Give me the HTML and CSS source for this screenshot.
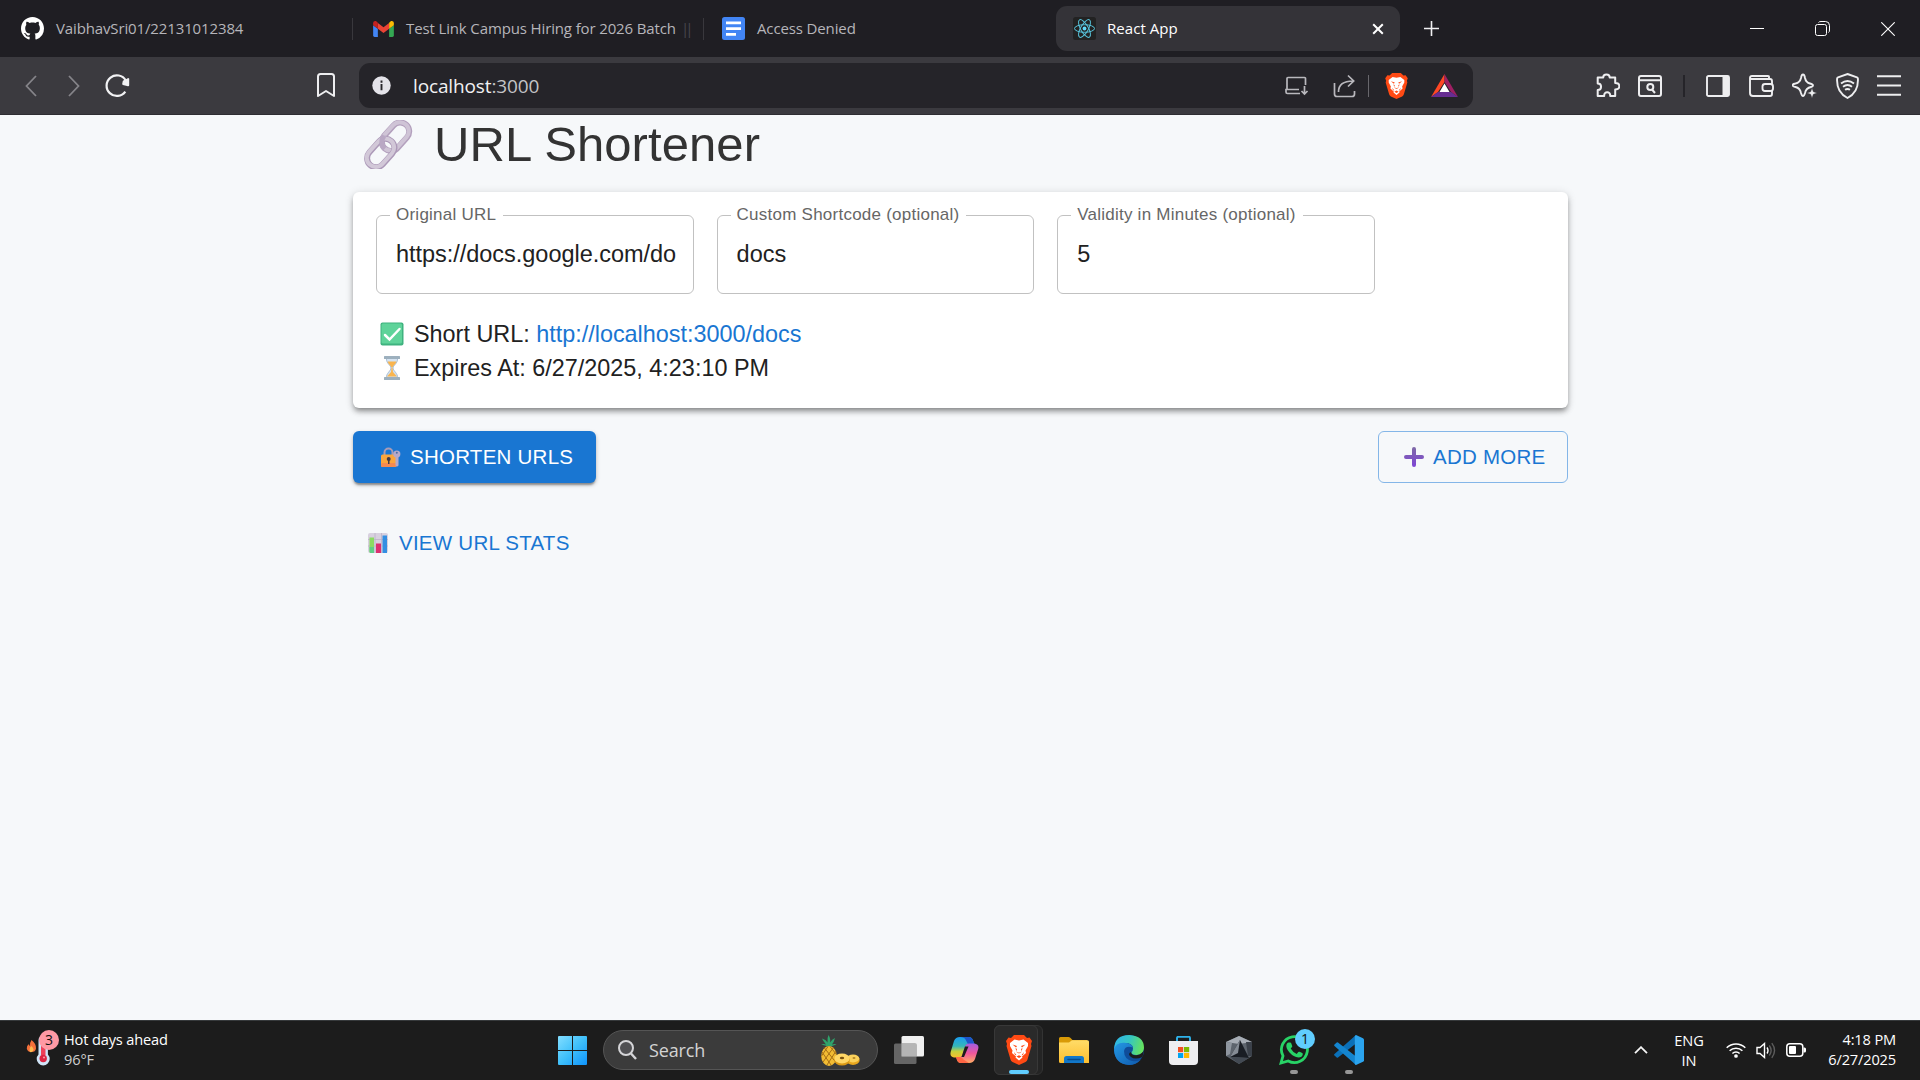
FILE: index.html
```html
<!DOCTYPE html>
<html lang="en">
<head>
<meta charset="utf-8">
<title>React App</title>
<link rel="stylesheet" href="styles.css">
</head>
<body>
<div class="screen">
  <header class="tabs">
    <div class="tab tab-first">
      <svg class="fav" width="23" height="23" viewBox="0 0 16 16"><path fill="#fff" d="M8 0C3.58 0 0 3.58 0 8c0 3.54 2.29 6.53 5.47 7.59.4.07.55-.17.55-.38 0-.19-.01-.82-.01-1.49-2.01.37-2.53-.49-2.69-.94-.09-.23-.48-.94-.82-1.13-.28-.15-.68-.52-.01-.53.63-.01 1.08.58 1.23.82.72 1.21 1.87.87 2.33.66.07-.52.28-.87.51-1.07-1.78-.2-3.64-.89-3.64-3.95 0-.87.31-1.59.82-2.15-.08-.2-.36-1.02.08-2.12 0 0 .67-.21 2.2.82.64-.18 1.32-.27 2-.27s1.36.09 2 .27c1.53-1.04 2.2-.82 2.2-.82.44 1.1.16 1.92.08 2.12.51.56.82 1.27.82 2.15 0 3.07-1.87 3.75-3.65 3.95.29.25.54.73.54 1.48 0 1.07-.01 1.93-.01 2.2 0 .21.15.46.55.38A8.01 8.01 0 0 0 16 8c0-4.42-3.58-8-8-8z"/></svg>
      <span class="tab-title">VaibhavSri01/22131012384</span>
    </div>
    <div class="tab tab-mail">
      <svg class="fav" width="21" height="16" viewBox="0 0 22 17"><path fill="#4285f4" d="M0 4.5l5 3.8V17H1.5A1.500 1.500 0 0 1 0 15.500z"/><path fill="#34a853" d="M22 4.500l-5 3.800V17h3.500a1.500 1.500 0 0 0 1.500-1.500z"/><path fill="#ea4335" d="M5 8.300V2l6 4.600L17 2v6.300l-6 4.500z"/><path fill="#c5221f" d="M0 4.500V2.300C0 .4 2.100-.6 3.600.6L5 1.800v6.500z"/><path fill="#fbbc04" d="M22 4.500V2.300C22 .4 19.900-.6 18.400.6L17 1.800v6.500z"/></svg>
      <span class="tab-title">Test Link Campus Hiring for 2026 Batch</span><span class="tab-cut">||</span>
    </div>
    <div class="tab tab-docs">
      <svg class="fav" width="23" height="23" viewBox="0 0 23 23"><rect width="23" height="23" rx="2.500" fill="#4285f4"/><path d="M4 5.800h15M4 11.600h15M4 17.300h10" stroke="#fff" stroke-width="2.800"/></svg>
      <span class="tab-title">Access Denied</span>
    </div>
    <div class="tab tab-active">
      <svg class="fav" width="23" height="23" viewBox="0 0 23 23"><rect width="23" height="23" rx="2.500" fill="#222222" /><g fill="none" stroke="#58c4dc" stroke-width="1"><ellipse cx="11.500" cy="11.500" rx="10" ry="3.800"/><ellipse cx="11.500" cy="11.500" rx="10" ry="3.800" transform="rotate(60 11.500 11.500)"/><ellipse cx="11.500" cy="11.500" rx="10" ry="3.800" transform="rotate(120 11.500 11.500)"/></g><circle cx="11.500" cy="11.500" r="1.900" fill="#61dafb"/></svg>
      <span class="tab-title">React App</span>
      <svg class="tab-x" width="12" height="12" viewBox="0 0 12 12"><path d="M1.200 1.200l9.600 9.600M10.800 1.200l-9.600 9.600" stroke="#fff" stroke-width="2"/></svg>
    </div>
    <svg class="newtab" width="15" height="15" viewBox="0 0 15 15"><path d="M7.500 0v15M0 7.500h15" stroke="#f0f0f2" stroke-width="1.600"/></svg>
    <div class="winctl">
      <svg width="14" height="14" viewBox="0 0 14 14"><path d="M0 6.500h14" stroke="#fff" stroke-width="1"/></svg>
      <svg width="15" height="15" viewBox="0 0 15 15" fill="none" stroke="#fff" stroke-width="1"><rect x=".5" y="3.500" width="11" height="11" rx="2"/><path d="M3.500 1.500Q4 .5 6 .5h4.500a4 4 0 0 1 4 4V9q0 2-1 2.500"/></svg>
      <svg width="14" height="14" viewBox="0 0 14 14"><path d="M.3.300l13.400 13.400M13.700.300L.3 13.700" stroke="#fff" stroke-width="1.100"/></svg>
    </div>
  </header>

  <nav class="toolbar">
    <svg class="i-back" width="12" height="22" viewBox="0 0 12 22"><path d="M11 1L1.500 11 11 21" fill="none" stroke="#858489" stroke-width="1.800"/></svg>
    <svg class="i-fwd" width="12" height="22" viewBox="0 0 12 22"><path d="M1 1l9.500 10L1 21" fill="none" stroke="#858489" stroke-width="1.800"/></svg>
    <svg class="i-reload" width="25" height="25" viewBox="0 0 25 25"><path d="M20.300 18.600A10.300 10.300 0 1 1 20.800 7.500" fill="none" stroke="#f2f2f4" stroke-width="2.200"/><path d="M23.200 6v6.200l-5-1.200 .5-2.500 3-1.500z" fill="#f2f2f4" stroke="#f2f2f4" stroke-width="2" stroke-linejoin="round"/></svg>
    <svg class="i-mark" width="18" height="25" viewBox="0 0 18 25"><path d="M1 3.500Q1 1 3.500 1h11Q17 1 17 3.500V23l-8-5-8 5z" fill="none" stroke="#eeeef0" stroke-width="2" stroke-linejoin="round"/></svg>
    <div class="omnibox">
      <svg width="19" height="19" viewBox="0 0 20 20"><circle cx="10" cy="10" r="9.700" fill="#e4e3e9"/><path d="M10 8.500V15M10 4.800V7" stroke="#28272c" stroke-width="2"/></svg>
      <span class="address">localhost<i>:3000</i></span>
      <svg class="i-cast" width="24" height="20" viewBox="0 0 24 20" fill="none" stroke="#b9b8bd" stroke-width="1.700"><path d="M20.500 9V2.500Q20.500 1.500 19.500 1.500H3Q2 1.500 2 2.500V13M14 13.500H1v2.500q0 1.500 1.500 1.500H15M19.500 10v8M16.500 15l3 3 3-3"/></svg>
      <svg class="i-share" width="23" height="24" viewBox="0 0 23 24" fill="none" stroke="#b9b8bd" stroke-width="1.700"><path d="M1.500 9v11Q1.500 22.500 4 22.500h15Q21.500 22.500 21.500 20v-3M5.500 18Q5.500 7 20 7M15 1.500L20.700 7 15 12.500"/></svg>
      <span class="omni-div"></span>
      <svg class="i-brave" width="23" height="26" viewBox="0 0 26 30"><use href="#brave"/></svg>
      <svg class="i-bat" width="27" height="23" viewBox="0 0 27 23"><path d="M13.500 0L0 23l7-5 6.500-10z" fill="#ff4724"/><path d="M13.500 0L27 23l-7-5-6.500-10z" fill="#9e1f63"/><path d="M0 23h27l-7-5H7z" fill="#662d91"/><path d="M13.500 9.500L8.500 18h10z" fill="#fff"/></svg>
    </div>
    <div class="actions">
      <svg class="a1" width="25" height="25" viewBox="0 0 25 25"><path d="M2 4.500h5.500C7.500.500 14 .5 14 4.500h5.500V10c5.500 0 5.500 6.500 0 6.500V23h-5c.5-5-6.500-5-6 0H2v-6c4.500 0 4.500-6.500 0-6.500z" transform="translate(.7 0)" fill="none" stroke="#eeeef0" stroke-width="2" stroke-linejoin="round"/></svg>
      <svg class="a2" width="24" height="22" viewBox="0 0 24 22" fill="none" stroke="#eeeef0" stroke-width="2"><rect x="1" y="1" width="22" height="20" rx="2"/><path d="M1 5.200h22M14 14.500l3 3.500"/><circle cx="12.300" cy="12" r="3"/></svg>
      <span class="act-div"></span>
      <svg class="a3" width="24" height="22" viewBox="0 0 24 22"><rect x="1" y="1" width="22" height="20" rx="1.500" fill="none" stroke="#eeeef0" stroke-width="1.900"/><path d="M16.500 1H23v20h-6.500z" fill="#eeeef0"/></svg>
      <svg class="a4" width="25" height="22" viewBox="0 0 25 22" fill="none" stroke="#eeeef0" stroke-width="1.900"><path d="M20 4V2q0-1-1-1H3Q1 1 1 3v15q0 3 3 3h17q2 0 2-2v-3M1 4h20q2 0 2 2v3"/><rect x="13.500" y="9" width="10.500" height="7" rx="2.500"/></svg>
      <svg class="a5" width="25" height="25" viewBox="0 0 25 25"><path d="M11 1.500q1.500 0 2 3.500 1 4.500 5 5.500 3 .8 3 2t-2 1.500q-5 1-6 6-.8 3-2 3t-2-3q-1-5-5.500-6-3-.7-3-1.800 0-1.200 3-1.700Q8 9.500 9 5q.5-3.500 2-3.500z" fill="none" stroke="#eeeef0" stroke-width="1.900"/><path d="M20 15l1.300 3.700L25 20l-3.700 1.300L20 25l-1.300-3.700L15 20l3.700-1.300z" fill="#eeeef0" stroke="#3b3a3f" stroke-width=".4"/></svg>
      <svg class="a6" width="23" height="26" viewBox="0 0 23 26" fill="none" stroke="#eeeef0" stroke-width="1.900"><path d="M11.500 1L21 4.300q.8.300.9 1.200.8 14-10.400 19.500Q.3 19.500 1.100 5.500 1.200 4.600 2 4.300z"/><path d="M5 10.500q6.500-5 13 0M7 13.800q4.500-3.500 9 0M9 16.800q2.500-1.500 5 0"/></svg>
      <svg class="a7" width="24" height="21" viewBox="0 0 24 21"><path d="M0 1.200h24M0 10.500h24M0 19.800h24" stroke="#eeeef0" stroke-width="2"/></svg>
    </div>
  </nav>

  <main class="page">
    <h1 class="heading">
      <svg width="49" height="49" viewBox="0 0 49 49"><g fill="none" transform="rotate(-48 24.500 24.500)"><rect x="19" y="15.500" width="32" height="18" rx="9" stroke="#b3a0bd" stroke-width="6"/><rect x="19" y="15" width="32" height="18" rx="9" stroke="#cfc4d6" stroke-width="4"/><rect x="-3" y="15.500" width="32" height="18" rx="9" stroke="#ac99b8" stroke-width="6"/><rect x="-3" y="15" width="32" height="18" rx="9" stroke="#d2c8d8" stroke-width="4"/><path d="M19 24.500a9 9 0 0 1 9-9" stroke="#b9a8c4" stroke-width="5"/></g></svg>
      <span class="heading-text">URL Shortener</span>
    </h1>
    <section class="card">
      <div class="fields">
        <fieldset class="field"><legend>Original URL</legend><span class="val">https://docs.google.com/do</span></fieldset>
        <fieldset class="field"><legend>Custom Shortcode (optional)</legend><span class="val">docs</span></fieldset>
        <fieldset class="field"><legend>Validity in Minutes (optional)</legend><span class="val">5</span></fieldset>
      </div>
      <div class="result">
        <p class="line"><svg width="24" height="24" viewBox="0 0 24 24"><rect x=".5" y=".5" width="23" height="23" rx="2" fill="#3fb27f"/><rect x="1.500" y="1.500" width="20.500" height="20" rx="1.500" fill="#5fd39a"/><path d="M5 13l4.500 4.500L19.500 7" fill="none" stroke="#fff" stroke-width="2.500" stroke-linecap="round"/></svg><span>Short URL: <a>http://localhost:3000/docs</a></span></p>
        <p class="line"><svg width="24" height="24" viewBox="0 0 24 24"><path d="M6.500 2.500h11c.5 5-4.500 6.500-4.500 9.500s5 5 4.500 10h-11C6 17 11 15 11 12S6 7.500 6.500 2.500z" fill="#d5e3f1" stroke="#a9bed3"/><path d="M7.500 5.500h9c-1 3-3.700 4-4 6h-1c-.300-2-3-3-4-6zM11.500 12h1l.5 4 4 4.500H7l4-4.500z" fill="#f9b54f"/><rect x="4" width="16" height="3" rx=".5" fill="#9db0be"/><rect x="4" y="21" width="16" height="3" rx=".5" fill="#9db0be"/></svg><span>Expires At: 6/27/2025, 4:23:10 PM</span></p>
      </div>
    </section>
    <div class="buttons">
      <a class="btn primary"><svg width="20" height="20" viewBox="0 0 20 20"><path d="M3.500 9V5.500a4 4 0 0 1 8 0V9" fill="none" stroke="#a89bb5" stroke-width="2"/><rect x="0" y="7.500" width="15.500" height="12.500" rx="1.500" fill="#fba63c"/><rect x="0" y="16" width="15.500" height="4" rx="1.500" fill="#f58a50"/><circle cx="15.800" cy="7" r="3.600" fill="#b7a9c9"/><path d="M14.500 9h3v9.500l-1.500 1.200-1.500-1.200z" fill="#b7a9c9"/><circle cx="15.800" cy="5.800" r="1" fill="#4b6ea5"/><circle cx="7.700" cy="12" r="2" fill="#433b46"/><rect x="7" y="12" width="1.500" height="5" fill="#433b46"/></svg><span>SHORTEN URLS</span></a>
      <a class="btn outline"><svg width="20" height="20" viewBox="0 0 20 20"><defs><linearGradient id="pl" x1="0" y1="0" x2="0" y2="1"><stop offset="0" stop-color="#7f6aa6"/><stop offset="1" stop-color="#7e45d6"/></linearGradient></defs><path d="M10 0q2 0 2 2v6h6q2 0 2 2t-2 2h-6v6q0 2-2 2t-2-2v-6H2q-2 0-2-2t2-2h6V2q0-2 2-2z" fill="url(#pl)"/></svg><span>ADD MORE</span></a>
    </div>
    <a class="stats"><svg width="20" height="20" viewBox="0 0 20 20"><rect width="20" height="20" rx="2" fill="#d8d1df"/><path d="M0 6.500h20M0 13h20M7 0v20M13.500 0v20" stroke="#bdb3c8" stroke-width=".8"/><path d="M1.500 4.500H6V20H3q-1.500 0-1.500-1.500z" fill="#8bdc62"/><path d="M1.500 14H6v6H3q-1.500 0-1.500-1.500z" fill="#5fcf86"/><rect x="8" y="10.500" width="5" height="9.500" fill="#dc3070"/><path d="M14.500 2.500H19V20h-4.500z" fill="#348fe2"/></svg><span>VIEW URL STATS</span></a>
  </main>

  <footer class="taskbar">
    <div class="weather">
      <div class="weather-icon">
        <svg width="34" height="36" viewBox="0 0 34 36"><path d="M5.500 8q5 4 4.500 8.500Q9.500 20 5.500 20T.8 16.500Q.5 13.500 3 12q0 1.500 1 2-.5-3 1.500-6z" fill="#f4703b"/><path d="M5.500 14q2 2 2 3.500T5.500 20t-2-2 2-4z" fill="#fdb94d"/><path d="M12.500 8a4.700 4.700 0 0 1 9.400 0v14.500a6.500 6.500 0 1 1-9.400 0z" fill="#cfe4f7"/><path d="M15 8h4.500v15H15z" fill="#ee4058"/><circle cx="17.200" cy="26.500" r="3.700" fill="#dc2543"/><circle cx="18" cy="25.500" r="1" fill="#ff9daa"/></svg>
        <span class="badge pink">3</span>
      </div>
      <div class="weather-text"><span>Hot days ahead</span><span class="temp">96°F</span></div>
    </div>
    <div class="apps">
      <svg class="win" width="29" height="29" viewBox="0 0 29 29"><defs><linearGradient id="wn" x1="0" y1="0" x2="1" y2="1"><stop offset="0" stop-color="#83deff"/><stop offset=".5" stop-color="#3fc0fb"/><stop offset="1" stop-color="#0f93fb"/></linearGradient></defs><path fill="url(#wn)" d="M1 0h13v14H0V1q0-1 1-1zM15 0h13q1 0 1 1v13H15zM0 15h14v14H1q-1 0-1-1zM15 15h14v13q0 1-1 1H15z"/></svg>
      <div class="search">
        <svg width="19" height="20" viewBox="0 0 19 20"><circle cx="8" cy="8" r="7" fill="#505053" stroke="#d5d5d8" stroke-width="2"/><path d="M13 13.500l5 5.500" stroke="#d5d5d8" stroke-width="2.400"/></svg>
        <span class="search-text">Search</span>
        <svg class="pine" width="40" height="31" viewBox="0 0 40 31"><path d="M9 12Q5 10 1 9.500q3-1 5 0Q3 6 2 3.500q4 1 5.500 4Q7 3 8.500 0q2.500 4 1.500 7.500Q12 4 15 3q-1 4-3 6.500 3-1 4.500 0Q12 10.500 10 12z" fill="#2fa36b"/><ellipse cx="9" cy="21" rx="7.800" ry="10" fill="#f2bc33"/><path d="M2 17l9 13M4 12.500l12 15M10 11.500l6.500 8M16 16L7 30M13.500 12.500L3 27M8 11.500L1.500 21" stroke="#a66e16" stroke-width="1"/><ellipse cx="33" cy="25" rx="6.700" ry="5" fill="#e9a71e"/><ellipse cx="33" cy="23.500" rx="6.300" ry="3.900" fill="#fbd15b"/><ellipse cx="22" cy="25" rx="7.800" ry="5.500" fill="#dc9a16"/><ellipse cx="22" cy="23.500" rx="7.600" ry="4.900" fill="#ffd766"/><ellipse cx="22" cy="23" rx="2.200" ry="1.200" fill="#7a520f"/><ellipse cx="34" cy="23" rx="1.500" ry=".8" fill="#9a6a14"/></svg>
      </div>
      <svg class="tview" width="30" height="28" viewBox="0 0 30 28"><rect x="7.500" width="22.500" height="20.500" rx="1.500" fill="#f0f0f0"/><rect y="7.500" width="22.500" height="20.500" rx="1.500" fill="#727272" fill-opacity=".85"/><path d="M7.500 7.500h15v13h-15z" fill="#b5b5b5"/></svg>
      <svg class="copilot" width="29" height="27" viewBox="0 0 29 27"><defs><linearGradient id="ca" x1="0" y1="0" x2="0" y2="1"><stop offset="0" stop-color="#1a9df0"/><stop offset=".45" stop-color="#35b6b8"/><stop offset=".7" stop-color="#c5d13e"/><stop offset="1" stop-color="#f7c02e"/></linearGradient><linearGradient id="cb" x1="0" y1="0" x2="0" y2="1"><stop offset="0" stop-color="#a25de0"/><stop offset=".5" stop-color="#f0569c"/><stop offset="1" stop-color="#ffad62"/></linearGradient></defs><path d="M10 0h9q3 0 4 3.500l1.500 3.800H18q-2 0-3 3L12.500 18q-1 2.500-3 2.500H4Q-.7 20 .8 14.500L4 4Q5.500 0 10 0z" fill="url(#ca)"/><path d="M10 0h9q3 0 4 3.500l1.500 3.800H18L15.500 2.500Q14.500 0 10 0z" fill="#1d55c9"/><path d="M19 26H11q-3 0-4-3l-1-3h3.500q2.300 0 3-2.500l3-9q.8-2 3.500-2h5q5.500.5 4.200 5.500L25 22q-1.500 4-6 4z" fill="url(#cb)"/><path d="M19 26H11q-3 0-4-3l-1-3h3.500q3 0 4 2.500z" fill="#ff6644"/><path d="M15 9.500h3.500L14 20h-2.500z" fill="#1c1c1c"/></svg>
      <div class="tile"><div class="tile-front"><svg width="26" height="30" viewBox="0 0 26 30"><defs><g id="brave"><path d="M8 0h10l3 3 2.500-.5L26 6l-1 3 .5 2-4 13.500q-.5 1.500-2 2.500L13 30l-6.500-3q-1.500-1-2-2.500L.5 11 1 9 0 6l2.500-3.500L5 3z" fill="#ff4a14"/><path d="M8.500 4.500L13 5.500l4.500-1 4.500 3.500v3l-2.500 4.500.5 2.500-4 3.500.5 1-3.500 3-3.500-3 .5-1-4-3.500.5-2.500L4 11V8z" fill="#fff"/><path d="M6.500 9.500l4.500 1.500-1 1.500zM19.500 9.500L15 11l1 1.500zM9.500 13l1 4 2.500 1.500 2.500-1.500 1-4-1.500 1 .8 2.500-2.800 1.200-2.800-1.200.8-2.500zM8 17l2.500 3.300L9 20zM18 17l-2.500 3.300L17 20zM10.500 21.500L13 20.300l2.500 1.200L13 23z" fill="#ff4a14"/></g></defs><use href="#brave"/></svg><i class="run on"></i></div></div>
      <svg class="folder" width="30" height="27" viewBox="0 0 30 27"><defs><linearGradient id="fo" x1="0" y1="0" x2="0" y2="1"><stop offset="0" stop-color="#ffdc68"/><stop offset="1" stop-color="#fdbe2f"/></linearGradient></defs><path d="M0 1.500Q0 0 1.500 0h8q1 0 1.800.8L13.500 3H28v5H0z" fill="#d99a07"/><path d="M0 5.500h10l3-2.200h15.500q1.500 0 1.500 1.500V26H1.500Q0 26 0 24.500z" fill="url(#fo)"/><path d="M5 26v-4.500Q5 19 7.500 19h15q2.500 0 2.500 2.500V26z" fill="#1277c9"/><path d="M9 22.500h12" stroke="#064b8c" stroke-width="1.500" stroke-linecap="round"/></svg>
      <svg class="edge" width="30" height="30" viewBox="0 0 30 30"><defs><linearGradient id="ea" x1="0" x2="1" y1=".3" y2=".5"><stop offset="0" stop-color="#2fb5e9"/><stop offset=".5" stop-color="#36c6c0"/><stop offset="1" stop-color="#67e35b"/></linearGradient><linearGradient id="eb" x1="0" x2="1" y1="0" y2="1"><stop offset="0" stop-color="#2499e4"/><stop offset="1" stop-color="#0f59ad"/></linearGradient></defs><circle cx="15" cy="15" r="15" fill="#0f4d9a"/><path d="M0 15Q0 0 15.500 0 30 1 30 13q-.5 7-7.500 7-5.500 0-5-3 1.500-1 1.500-3.500 0-5.500-8-5.500Q2 8.500 0 15z" fill="url(#ea)"/><path d="M0 15Q2 7 10.500 7.800q7 .7 8.300 4.500Q11 10 10 16q0 8 8 10 6 1 9-1.500Q22 30 15 30 1 29 0 15z" fill="url(#eb)"/><path d="M17 17q.5 4 6.500 3 4.500-.8 6.500-5l-1.500 7Q21 25 17 22t0-5z" fill="#1c1c1c"/></svg>
      <svg class="store" width="29" height="29" viewBox="0 0 29 29"><path d="M8 7V2q0-1.200 1.200-1.200h10.600Q21 .8 21 2v5" fill="none" stroke="#2eb2ea" stroke-width="1.900"/><path d="M0 5h29v20q0 4-4 4H4q-4 0-4-4z" fill="#eeeef0"/><path d="M9 11h5.200v5.200H9z" fill="#f25022"/><path d="M15 11h5.200v5.200H15z" fill="#7fba00"/><path d="M9 17h5.200v5H9z" fill="#00a4ef"/><path d="M15 17h5.200v5H15z" fill="#ffb900"/></svg>
      <svg class="hex" width="26" height="28" viewBox="0 0 26 28"><path d="M13 0l13 6v14l-13 8-13-8V6z" fill="#5d646d"/><path d="M13 0l13 6-13 2L0 6z" fill="#a7adb5"/><path d="M0 6l6 1-2 11-4 2z" fill="#8f969f"/><path d="M26 6l-6 0 2 14 4 0z" fill="#3b414a"/><path d="M14 4l9 18-19-1z" fill="#191d24"/><path d="M14 4L4 21l8-4z" fill="#858c95"/><path d="M4 21l19 1-10 6z" fill="#434a53"/></svg>
      <div class="wa"><svg width="30" height="30" viewBox="0 0 30 30"><path d="M2 28l2-7.200A13 13 0 1 1 9.200 26z" fill="none" stroke="#28d366" stroke-width="2.800"/><path d="M9.500 7.500h1.700q.8 0 1 .8l1 2.700q.2.600-.200 1l-1.300 1.600q2.200 4 6 5.300l1.600-1.900q.5-.5 1.200-.2l2.700 1.300q.7.400.6 1.100-.600 3.300-4.300 3.300-5-.5-9-5t-3-8q.8-2 2-2z" fill="#28d366"/></svg><span class="badge blue">1</span><i class="run"></i></div>
      <div class="vs"><svg width="30" height="30" viewBox="0 0 30 30"><path d="M22 0v8.500L4 22.500q-.7.500-1.300 0L.5 20.500q-.8-.8 0-1.500z" fill="#0b70b8"/><path d="M22 30v-8.500L4 7.500q-.7-.5-1.300 0L.5 9.500q-.8.800 0 1.500z" fill="#1485cf"/><path d="M22 0l7 3.200q1 .5 1 1.600v20.400q0 1.100-1 1.600L22 30q-1.200-.5-1.200-1.500v-27Q20.800.500 22 0z" fill="#2ba4ee"/></svg><i class="run"></i></div>
    </div>
    <div class="tray">
      <svg class="chev" width="14" height="8" viewBox="0 0 14 8"><path d="M1 7.200l6-6 6 6" fill="none" stroke="#f5f5f5" stroke-width="1.800"/></svg>
      <div class="lang"><span>ENG</span><span>IN</span></div>
      <svg class="wifi" width="20" height="16" viewBox="0 0 20 16" fill="none" stroke="#fff" stroke-width="1.500"><path d="M.7 5.800a13 13 0 0 1 18.600 0M3.600 8.800a9 9 0 0 1 12.800 0M6.400 11.600a5 5 0 0 1 7.200 0"/><circle cx="10" cy="14" r="1.100" fill="#fff"/></svg>
      <svg class="snd" width="20" height="17" viewBox="0 0 20 17" fill="none" stroke="#fff" stroke-width="1.400"><path d="M1 5.500h3l4.500-4v14l-4.500-4H1zM11 5.500q2 3 0 6"/><path d="M13.300 3.500q3.700 5 0 10M15.800 1.200q5.500 7.300 0 14.600" stroke="#5d5d5d"/></svg>
      <svg class="bat" width="20" height="14" viewBox="0 0 20 14"><rect x=".8" y=".8" width="16" height="12.400" rx="3" fill="none" stroke="#fff" stroke-width="1.500"/><rect x="3" y="3" width="7" height="8" rx="1" fill="#fff"/><path d="M17.500 4.500h1q1.500 0 1.500 1.500v2q0 1.500-1.500 1.500h-1z" fill="#fff"/></svg>
      <div class="clock"><span>4:18 PM</span><span>6/27/2025</span></div>
    </div>
  </footer>
</div>
</body>
</html>
```
FILE: styles.css
```css
* { box-sizing: border-box; }
body { margin: 0; overflow: hidden; font-family: "Open Sans", "Noto Sans", sans-serif; }
svg { display: block; flex: none; }
i { font-style: normal; }
.screen { display: flex; flex-direction: column; width: 1920px; height: 1080px; background: #f6f8fa; white-space: nowrap; }

.tabs { display: flex; align-items: center; flex: none; height: 57px; background: #1f1e23; color: #b6b5ba; font-size: 15px; letter-spacing: -.13px; }
.tab { display: flex; align-items: center; height: 22px; }
.tab-title, .tab-cut { padding-bottom: 2px; }
.fav { margin-right: 12px; }
.tab-first { width: 353px; padding-left: 21px; border-right: 1px solid #39383d; }
.tab-mail { width: 351px; padding-left: 20px; border-right: 1px solid #39383d; }
.tab-cut { margin-left: 5px; color: #48474c; letter-spacing: -4px; }
.tab-docs { width: 352px; padding-left: 18px; }
.tab-active { width: 344px; height: 45px; padding-left: 17px; border-radius: 11px; background: #343338; color: #fff; letter-spacing: .05px; }
.tab-active .fav { margin-right: 11px; }
.tab-x { margin: 0 16px 0 auto; }
.newtab { margin-left: 24px; }
.winctl { display: flex; align-items: center; gap: 51px; margin-left: auto; padding-right: 25px; }

.toolbar { display: flex; align-items: center; flex: none; height: 58px; background: #3b3a3f; border-bottom: 1px solid #2e2d32; }
.i-back { margin-left: 25px; }
.i-fwd { margin-left: 31px; }
.i-reload { margin-left: 25px; }
.i-mark { margin-left: 187px; }
.omnibox { display: flex; align-items: center; width: 1114px; height: 45px; margin-left: 24px; padding-left: 13px; border-radius: 11px; background: #252429; color: #f1f1f3; font-size: 19px; letter-spacing: -.13px; }
.address { width: 126px; margin-left: 22px; }
.address i { color: #c3c3c6; }
.i-cast { margin-left: 746px; }
.i-share { margin-left: 24px; }
.omni-div { width: 1px; height: 22px; margin-left: 12px; background: #68676c; }
.i-brave { margin-left: 16px; }
.i-bat { margin-left: 23px; }
.actions { display: flex; align-items: center; margin-left: 122px; }
.a2 { margin-left: 18px; }
.act-div { width: 2px; height: 22px; margin-left: 21px; background: #252429; }
.a3 { margin-left: 21px; }
.a4 { margin-left: 19px; }
.a5 { margin-left: 18px; }
.a6 { margin-left: 19px; }
.a7 { margin-left: 18px; }

.page { flex: 1; padding-left: 353px; font-family: "Liberation Sans", Arial, sans-serif; color: #212121; }
.heading { display: flex; align-items: center; height: 58px; margin: 0 0 19px; padding-left: 11px; font-size: 49px; font-weight: 400; letter-spacing: .08px; color: #333; }
.heading-text { margin-left: 21px; }
.card { width: 1215px; height: 216px; padding: 13px 23px 0; border-radius: 6px; background: #fff; box-shadow: 0 4px 5px -2px rgba(0,0,0,.3), 0 4px 6px rgba(0,0,0,.18), 0 1px 10px rgba(0,0,0,.12); }
.fields { display: flex; gap: 23px; }
.field { width: 317.6px; height: 89px; margin: 0; padding: 0 13px; border: 1px solid #c1c1c1; border-radius: 6px; min-width: 0; }
.field legend { height: 20px; padding: 0 7px 0 6px; font-size: 17px; line-height: 20px; letter-spacing: .24px; color: #666; }
.val { display: block; padding: 11px 0 0 6px; font-size: 23.5px; line-height: 36px; letter-spacing: -.03px; }
.result { padding-top: 23px; }
.line { display: flex; align-items: center; height: 34px; margin: 0; padding-left: 4px; font-size: 23.4px; }
.line span { margin-left: 10px; }
.line a, .stats { color: #1976d2; }
.buttons { display: flex; justify-content: space-between; width: 1215px; margin-top: 23px; }
.btn, .stats { display: flex; align-items: center; height: 52px; font-size: 20.5px; letter-spacing: .25px; }
.btn { border-radius: 6px; }
.btn span { margin-left: 9px; }
.primary { width: 243px; padding-left: 28px; background: #1976d2; color: #fff; box-shadow: 0 3px 2px -1px rgba(0,0,0,.3), 0 2px 4px rgba(0,0,0,.25); }
.outline { width: 190px; padding-left: 25px; border: 1px solid #84b6e8; color: #1976d2; }
.stats { margin-top: 34px; padding-left: 15px; }
.stats span { margin-left: 11px; }

.taskbar { display: flex; align-items: center; flex: none; height: 60px; padding-bottom: 1px; background: #1c1c1c; border-top: 1px solid #36393b; color: #fff; font-size: 14.6px; letter-spacing: -.15px; }
.weather { display: flex; align-items: center; width: 558px; padding-left: 26px; }
.weather-icon { position: relative; }
.badge { position: absolute; width: 20px; height: 20px; border-radius: 10px; font-size: 14px; line-height: 20px; text-align: center; color: #111; }
.pink { left: 13px; top: -2px; background: #ff99a4; }
.blue { left: 16px; top: -6px; background: #60cdff; }
.weather-text { display: flex; flex-direction: column; margin-left: 4px; padding-bottom: 2px; line-height: 20px; }
.temp { color: #cfcfcf; }
.apps { display: flex; align-items: center; height: 58px; }
.search { display: flex; align-items: center; width: 275px; height: 40px; margin-left: 16px; padding-left: 14px; border: 1px solid #555; border-radius: 20px; background: #3b3b3b; color: #d3d3d3; font-size: 18px; }
.search-text { width: 56px; margin-left: 12px; }
.pine { margin-left: 115px; }
.tview { margin-left: 16px; }
.copilot { margin-left: 26px; }
.tile { width: 49px; height: 50px; margin-left: 15px; border: 1px solid #333; border-radius: 6px; background: #242424; }
.tile-front { position: relative; display: flex; align-items: center; width: 44px; height: 50px; margin: -1px; padding-left: 11px; border: 1px solid #383838; border-radius: 6px; background: #2a2a2a; }
.run { position: absolute; left: 11px; bottom: -9px; width: 8px; height: 4px; border-radius: 2px; background: #969696; }
.run.on { left: 14px; bottom: 0; width: 20px; background: #60cdff; }
.folder { margin-left: 16px; }
.edge { margin-left: 25px; }
.store { margin-left: 25px; }
.hex { margin-left: 28px; }
.wa { position: relative; margin-left: 27px; }
.vs { position: relative; margin-left: 25px; }
.tray { display: flex; align-items: center; height: 58px; margin-left: auto; padding-right: 24px; }
.lang { display: flex; flex-direction: column; align-items: center; width: 30px; margin-left: 26px; line-height: 20px; }
.wifi { margin-left: 22px; }
.snd { margin-left: 10px; }
.bat { margin-left: 10px; }
.clock { display: flex; flex-direction: column; align-items: flex-end; width: 70px; margin-left: 20px; padding-bottom: 2px; line-height: 20px; }
```
